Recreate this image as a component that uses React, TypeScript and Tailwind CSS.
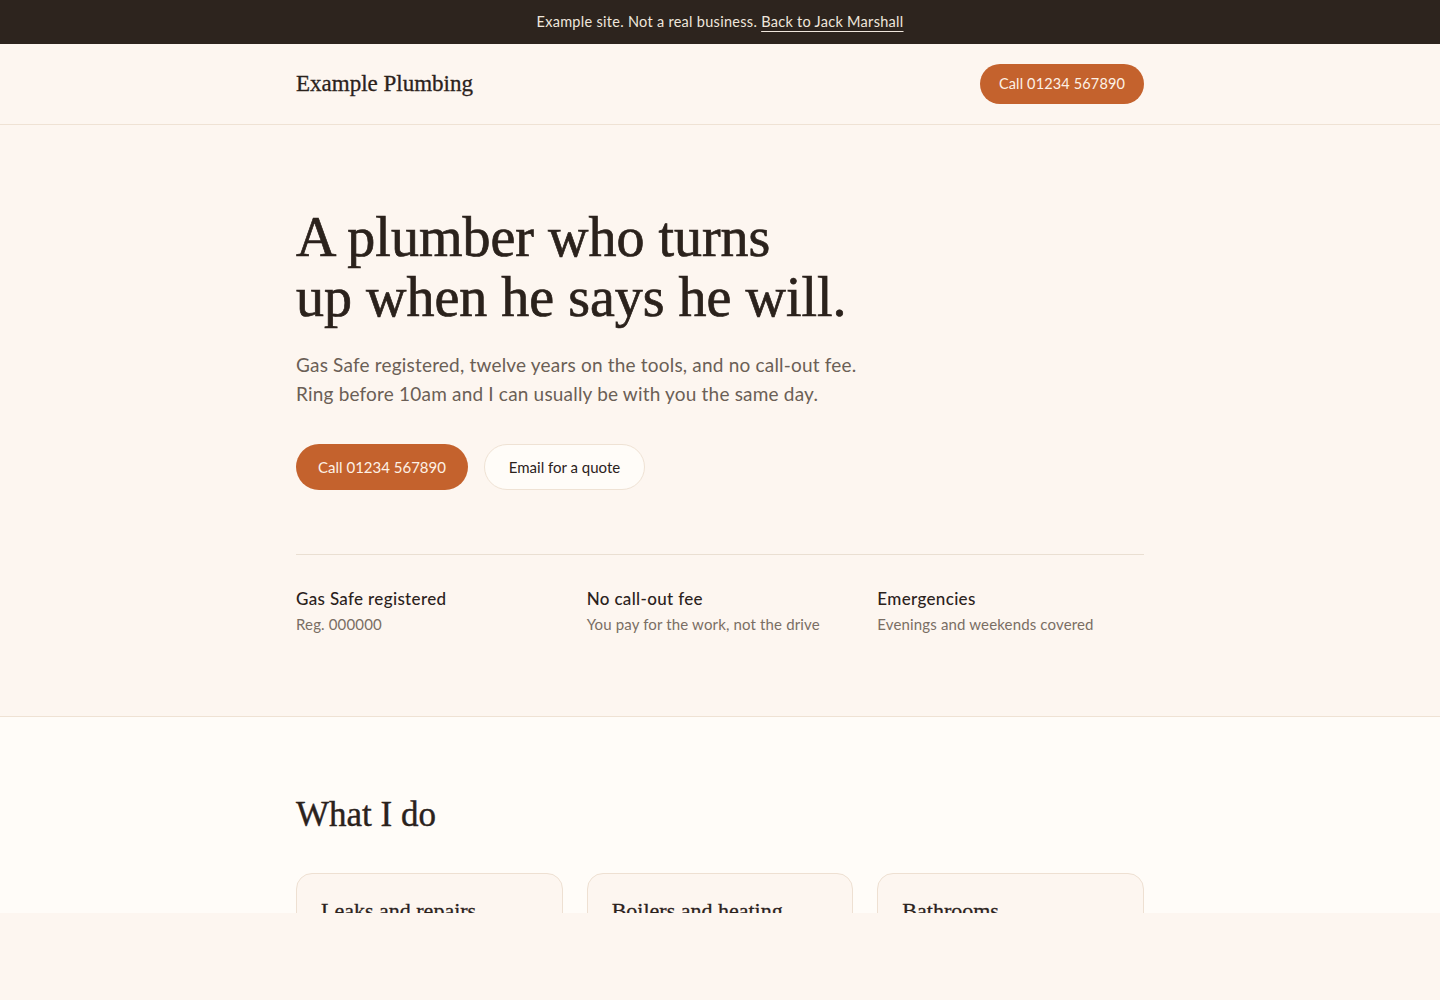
const SERIF = "font-['Liberation_Serif',serif]"

const FEATURES = [
  { title: 'Gas Safe registered', text: 'Reg. 000000' },
  { title: 'No call-out fee', text: 'You pay for the work, not the drive' },
  { title: 'Emergencies', text: 'Evenings and weekends covered' },
]

const SERVICES = ['Leaks and repairs', 'Boilers and heating', 'Bathrooms']

export default function App() {
  return (
    <div className="min-h-[1000px] bg-[#fdf6f0] font-['Lato',sans-serif] text-[#2b221c]">
      <div className="h-[913px] overflow-hidden">
        {/* Notice bar */}
        <div className="flex h-11 items-center justify-center bg-[#2d241e] text-[14.5px] tracking-[0.02em] text-[#efe6dc]">
          <span>Example site. Not a real business.&nbsp;</span>
          <a href="#" className="underline underline-offset-4 decoration-1">Back to Jack Marshall</a>
        </div>

        {/* Header */}
        <header className="border-b border-[#efe2d4] bg-[#fdf6f0]">
          <div className="mx-auto flex h-20 w-[848px] items-center justify-between">
            <div className={`${SERIF} text-[23px] text-[#2b221c] [-webkit-text-stroke:0.3px_#2b221c]`}>Example Plumbing</div>
            <a href="#" className="flex h-10 w-[164px] items-center justify-center rounded-full bg-[#c4622d] text-[14.5px] tracking-[0.01em] text-[#fdf1e6]">
              Call 01234 567890
            </a>
          </div>
        </header>

        {/* Hero */}
        <section className="border-b border-[#efe2d4] bg-[#fdf6f0]">
          <div className="mx-auto w-[848px] pt-[82px] pb-[82px]">
            <h1 className={`${SERIF} text-[56px] leading-[60px] text-[#2b221c] [-webkit-text-stroke:0.7px_#2b221c]`}>
              A plumber who turns
              <br />
              up when he says he will.
            </h1>
            <p className="mt-[23px] text-[19px] leading-[29px] tracking-[0.01em] text-[#6b5f56]">
              Gas Safe registered, twelve years on the tools, and no call-out fee.
              <br />
              Ring before 10am and I can usually be with you the same day.
            </p>
            <div className="mt-9 flex gap-4">
              <a href="#" className="flex h-[46px] w-[172px] items-center justify-center rounded-full bg-[#c4622d] text-[15px] text-[#fdf1e6]">
                Call 01234 567890
              </a>
              <a href="#" className="flex h-[46px] w-[161px] items-center justify-center rounded-full border border-[#efe2d4] bg-[#fffcf8] text-[15px] text-[#2b221c]">
                Email for a quote
              </a>
            </div>

            <div className="mt-16 grid grid-cols-3 gap-6 border-t border-[#eadfd2] pt-[32px]">
              {FEATURES.map(f => (
                <div key={f.title}>
                  <div className="text-[17px] font-medium leading-6 tracking-[0.02em] text-[#2b221c]">{f.title}</div>
                  <div className="mt-[3px] text-[15px] leading-5 tracking-[0.01em] text-[#7a6e64]">{f.text}</div>
                </div>
              ))}
            </div>
          </div>
        </section>

        {/* Services */}
        <section className="bg-[#fffcf8]">
          <div className="mx-auto w-[848px] pt-[76px]">
            <h2 className={`${SERIF} text-[35px] leading-[44px] text-[#2b221c] [-webkit-text-stroke:0.4px_#2b221c]`}>What I do</h2>
            <div className="mt-[36px] grid grid-cols-3 gap-6">
              {SERVICES.map(s => (
                <div key={s} className="h-[200px] rounded-2xl border border-[#eee0d2] bg-[#fdf6f0] px-6 pt-[23px]">
                  <div className={`${SERIF} text-[22px] leading-7 text-[#2b221c] [-webkit-text-stroke:0.3px_#2b221c]`}>{s}</div>
                </div>
              ))}
            </div>
          </div>
        </section>
      </div>
    </div>
  )
}
